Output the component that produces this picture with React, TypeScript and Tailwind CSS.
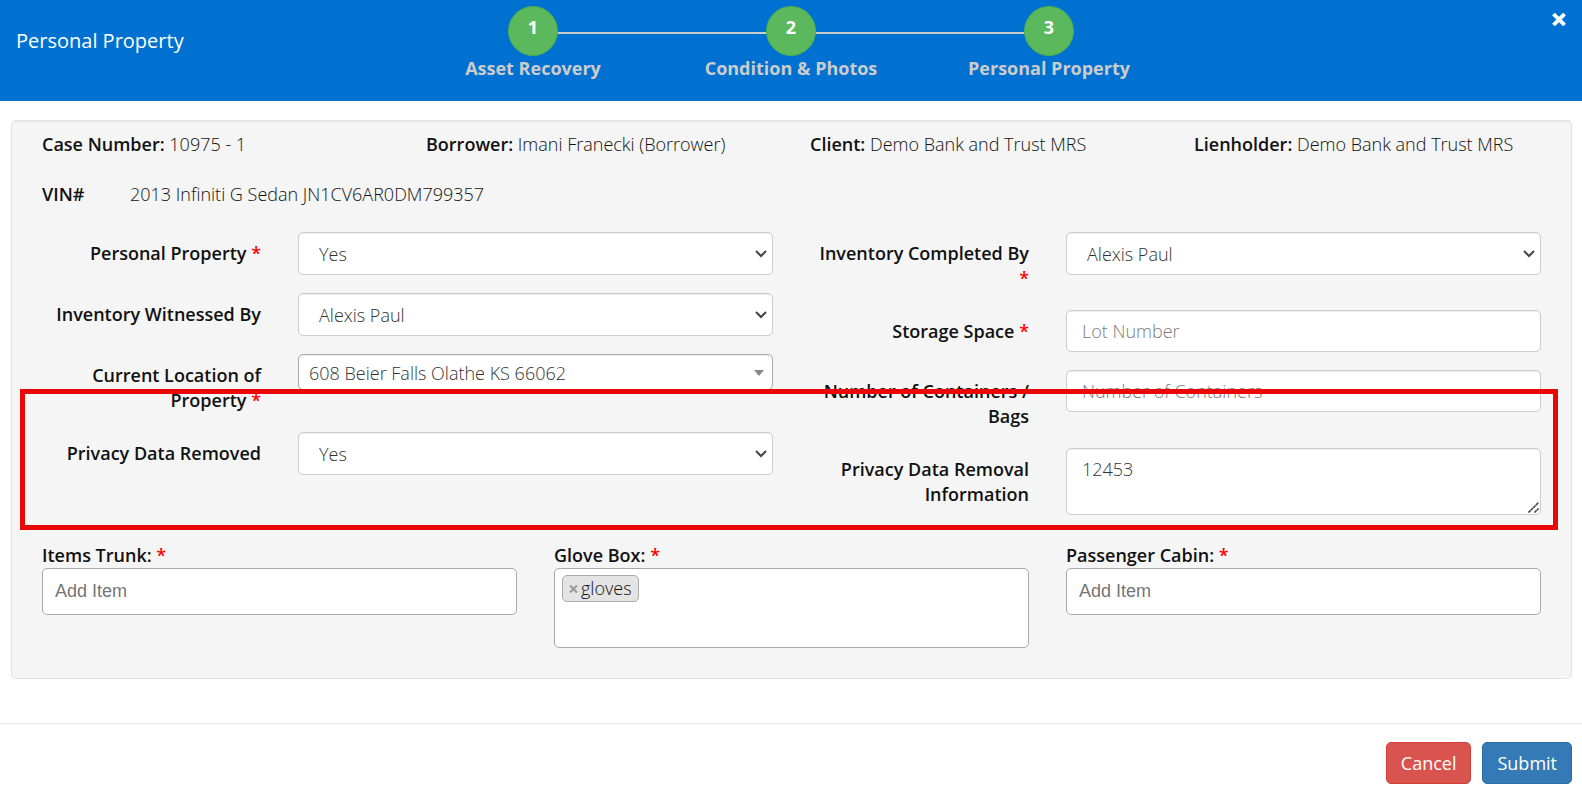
import { useState } from 'react';
import type { ReactNode } from 'react';
import clsx from 'clsx';

// ---------------------------------------------------------------------------
// Data
// ---------------------------------------------------------------------------

const STEPS = ['Asset Recovery', 'Condition & Photos', 'Personal Property'];

const CASE_INFO = [
  { label: 'Case Number:', value: '10975 - 1' },
  { label: 'Borrower:', value: 'Imani Franecki (Borrower)' },
  { label: 'Client:', value: 'Demo Bank and Trust MRS' },
  { label: 'Lienholder:', value: 'Demo Bank and Trust MRS' },
];

const controlClass =
  'block w-full rounded-[5px] border bg-white font-light text-[#333] shadow-[inset_0_1px_1px_rgba(0,0,0,0.075)] outline-none placeholder:text-[#7c7c7c] focus:border-[#66afe9]';

// ---------------------------------------------------------------------------
// Form pieces
// ---------------------------------------------------------------------------

const Required = () => <span className="text-[#f00]">*</span>;

interface FieldProps {
  id: string;
  label: string;
  required?: boolean;
  children: ReactNode;
}

const Field = ({ id, label, required, children }: FieldProps) => (
  <div className="mb-[18px] flex items-start">
    <label htmlFor={id} className="w-1/3 pt-[9px] pr-[18px] pb-px pl-[19px] text-right font-semibold">
      {label} {required && <Required />}
    </label>
    <div className="w-2/3 pr-[18px] pl-[19px]">{children}</div>
  </div>
);

interface SelectProps {
  id: string;
  options: string[];
  compact?: boolean;
}

const Select = ({ id, options, compact }: SelectProps) => (
  <div className="relative">
    <select
      id={id}
      className={clsx(
        controlClass,
        'appearance-none pr-8',
        compact ? 'h-[36px] border-[#aaa] pt-[2px] pl-[10px]' : 'h-[43px] border-[#ccc] pt-[2px] pl-5'
      )}
    >
      {options.map(option => (
        <option key={option}>{option}</option>
      ))}
    </select>
    {compact ? (
      <svg className="pointer-events-none absolute top-[16px] right-[9px] h-[6px] w-[10px]" viewBox="0 0 10 6">
        <path d="M0 0h10L5 6z" fill="#888" />
      </svg>
    ) : (
      <svg className="pointer-events-none absolute top-[18px] right-[6px] h-[8px] w-[12px]" viewBox="0 0 12 8">
        <path d="M1 1l5 5 5-5" fill="none" stroke="#444" strokeWidth="2" />
      </svg>
    )}
  </div>
);

interface TagBoxProps {
  id: string;
  label: string;
  initialTags?: string[];
}

const TagBox = ({ id, label, initialTags = [] }: TagBoxProps) => {
  const [tags, setTags] = useState(initialTags);
  const [draft, setDraft] = useState('');

  const addTag = () => {
    if (!draft.trim()) return;
    setTags([...tags, draft.trim()]);
    setDraft('');
  };

  return (
    <div className="w-1/3 pr-[18px] pl-[19px]">
      <label htmlFor={id} className="block font-semibold">
        {label} <Required />
      </label>
      <div className="rounded-[5px] border border-[#aaa] bg-white px-[7px] focus-within:border-black">
        {tags.length > 0 && (
          <ul className="flex flex-wrap gap-[6px] pt-[6px]">
            {tags.map(tag => (
              <li
                key={tag}
                className="flex h-[27px] items-center gap-[3px] rounded-[5px] border border-[#aaa] bg-[#e4e4e4] px-[6px] font-light"
              >
                <button
                  type="button"
                  aria-label={`Remove ${tag}`}
                  className="text-[#999]"
                  onClick={() => setTags(tags.filter(t => t !== tag))}
                >
                  <svg className="h-[8px] w-[9px]" viewBox="0 0 9 8">
                    <path d="M1 .5l7 7M8 .5l-7 7" stroke="currentColor" strokeWidth="2" />
                  </svg>
                </button>
                {tag}
              </li>
            ))}
          </ul>
        )}
        <input
          id={id}
          value={draft}
          placeholder={tags.length > 0 ? '' : 'Add Item'}
          onChange={e => setDraft(e.target.value)}
          onKeyDown={e => e.key === 'Enter' && addTag()}
          className="block h-[45px] w-full px-[5px] font-['Liberation_Sans',sans-serif] text-[18px] outline-none placeholder:text-[#757575]"
        />
      </div>
    </div>
  );
};

// ---------------------------------------------------------------------------
// Header
// ---------------------------------------------------------------------------

const Header = () => (
  <header className="relative flex min-h-[101px] justify-center bg-[#0071d1]">
    <h1 className="absolute top-[26px] left-[16px] text-[20px] leading-[30px] text-white">Personal Property</h1>

    <ol className="flex pt-[6px]">
      {STEPS.map((step, i) => (
        <li key={step} className="relative flex w-[258px] flex-col items-center">
          {i > 0 && <span className="absolute top-[26px] right-1/2 h-[2px] w-full bg-[#ccc]" />}
          <span className="relative z-10 flex size-[50px] justify-center rounded-full border border-[#4cae4c] bg-[#5cb85c] pt-[8px] font-bold text-white">
            {i + 1}
          </span>
          <span className="font-bold text-[#ccc]">{step}</span>
        </li>
      ))}
    </ol>

    <button type="button" aria-label="Close" className="absolute top-[13px] right-[16px] text-white">
      <svg className="h-[13px] w-[14px]" viewBox="0 0 14 13">
        <path d="M2.8 2.3l8.4 8.4M11.2 2.3l-8.4 8.4" stroke="currentColor" strokeWidth="3.8" strokeLinecap="square" />
      </svg>
    </button>
  </header>
);

// ---------------------------------------------------------------------------
// App
// ---------------------------------------------------------------------------

export default function App() {
  return (
    <div className="bg-white font-['Open_Sans',sans-serif] text-[18px] leading-[25px] text-[#111]">
      <Header />

      <form onSubmit={e => e.preventDefault()}>
        <main className="relative mx-[10px] mt-[19px] ml-[11px] rounded-[5px] border border-[#e3e3e3] bg-[#f5f5f5] pt-[11px] pr-[12px] pb-[30px] pl-[11px] shadow-[inset_0_1px_1px_rgba(0,0,0,0.05)]">
          <div className="grid grid-cols-4">
            {CASE_INFO.map(({ label, value }) => (
              <p key={label} className="pr-[18px] pl-[19px] font-light">
                <b className="font-semibold">{label}</b> {value}
              </p>
            ))}
          </div>

          <div className="my-[25px] flex px-[19px]">
            <b className="w-[88px] font-semibold">VIN#</b>
            <span className="font-light">2013 Infiniti G Sedan JN1CV6AR0DM799357</span>
          </div>

          <div className="grid grid-cols-2">
            <div>
              <Field id="personal-property" label="Personal Property" required>
                <Select id="personal-property" options={['Yes', 'No']} />
              </Field>
              <Field id="witnessed-by" label="Inventory Witnessed By">
                <Select id="witnessed-by" options={['Alexis Paul']} />
              </Field>
              <Field id="location" label="Current Location of Property" required>
                <Select id="location" options={['608 Beier Falls Olathe KS 66062']} compact />
              </Field>
              <Field id="privacy-removed" label="Privacy Data Removed">
                <Select id="privacy-removed" options={['Yes', 'No']} />
              </Field>
            </div>
            <div>
              <Field id="completed-by" label="Inventory Completed By" required>
                <Select id="completed-by" options={['Alexis Paul']} />
              </Field>
              <Field id="storage-space" label="Storage Space" required>
                <input
                  id="storage-space"
                  placeholder="Lot Number"
                  className={clsx(controlClass, 'h-[42px] border-[#ccc] px-[15px]')}
                />
              </Field>
              <Field id="containers" label="Number of Containers / Bags">
                <input
                  id="containers"
                  placeholder="Number of Containers"
                  className={clsx(controlClass, 'h-[42px] border-[#ccc] px-[15px]')}
                />
              </Field>
              <Field id="privacy-info" label="Privacy Data Removal Information">
                <div className="relative">
                  <textarea
                    id="privacy-info"
                    defaultValue="12453"
                    className={clsx(controlClass, 'h-[67px] resize-none border-[#ccc] px-[15px] py-[8px]')}
                  />
                  {/* Resize grip */}
                  <svg
                    className="pointer-events-none absolute right-[2px] bottom-[2px] size-[11px]"
                    viewBox="0 0 11 11"
                  >
                    <path d="M.5 10.5l10-10M6.5 10.5l4-4" stroke="#444" strokeWidth="1.6" strokeDasharray="3 .4" />
                  </svg>
                </div>
              </Field>
            </div>
          </div>

          <div className="mt-[10px] flex items-start">
            <TagBox id="items-trunk" label="Items Trunk:" />
            <TagBox id="glove-box" label="Glove Box:" initialTags={['gloves']} />
            <TagBox id="passenger-cabin" label="Passenger Cabin:" />
          </div>

          {/* Highlight around the privacy data fields */}
          <div className="pointer-events-none absolute top-[268px] right-[13px] left-[8px] h-[141px] border-5 border-[#e80808]" />
        </main>

        <footer className="mt-[44px] flex justify-end gap-[11px] border-t border-[#e5e5e5] px-[10px] pt-[18px] pb-[10px] text-white">
          <button type="button" className="h-[42px] rounded-[5px] border border-[#d43f3a] bg-[#d9534f] px-[14px]">
            Cancel
          </button>
          <button type="submit" className="h-[42px] rounded-[5px] border border-[#2e6da4] bg-[#337ab7] px-[14px]">
            Submit
          </button>
        </footer>
      </form>
    </div>
  );
}
